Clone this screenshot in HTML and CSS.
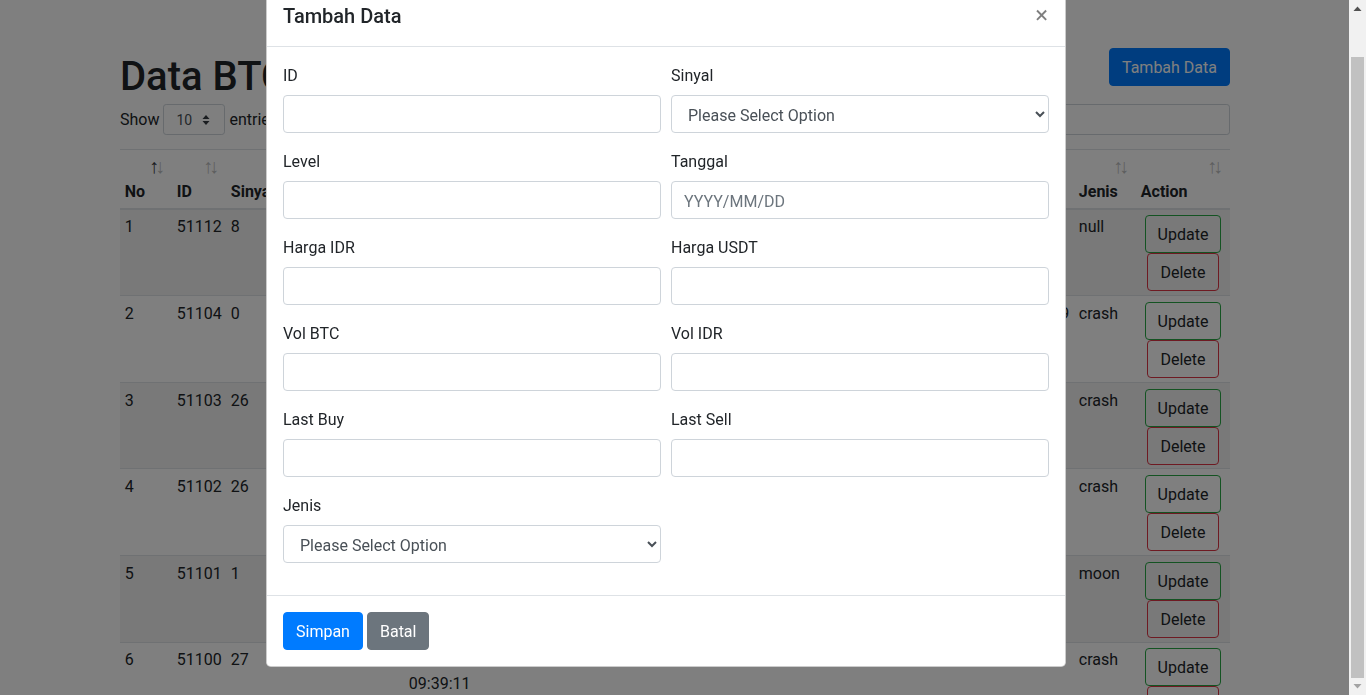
FILE: index.html
```html
<!DOCTYPE html>
<html lang="id">
<head>
<meta charset="utf-8">
<title>Data BTC</title>
<link rel="stylesheet" href="styles.css">
</head>
<body>
<div class="container">
  <div class="page-head">
    <h1 class="page-title">Data BTC IDR</h1>
    <button class="btn btn-primary" type="button">Tambah Data</button>
  </div>
  <div class="dt-controls">
    <div class="dt-length">Show
      <span class="sel-sm"><span>10</span>
        <svg class="sel-sm-icon" width="8" height="12" viewBox="0 0 8 12"><path d="M4 1 L7.5 5 H0.5 Z M4 11 L0.5 7 H7.5 Z" fill="#343a40"/></svg>
      </span>
      entries</div>
    <div class="dt-filter">Search: <span class="search-box"></span></div>
  </div>
  <table class="dt-table">
    <colgroup>
      <col class="c-no"><col class="c-id"><col class="c-sinyal"><col class="c-level"><col class="c-tanggal">
      <col class="c-hidr"><col class="c-husdt"><col class="c-vbtc"><col class="c-vidr"><col class="c-lbuy">
      <col class="c-lsell"><col class="c-jenis"><col class="c-action">
    </colgroup>
    <thead>
      <tr>
        <th class="sorting sorting-asc">No</th>
        <th class="sorting">ID</th>
        <th class="sorting">Sinyal</th>
        <th class="sorting">Level</th>
        <th class="sorting">Tanggal</th>
        <th class="sorting">Harga IDR</th>
        <th class="sorting">Harga USDT</th>
        <th class="sorting">Vol BTC</th>
        <th class="sorting">Vol IDR</th>
        <th class="sorting">Last Buy</th>
        <th class="sorting">Last Sell</th>
        <th class="sorting">Jenis</th>
        <th class="sorting">Action</th>
      </tr>
    </thead>
    <tbody>
      <tr class="odd">
        <td>1</td><td>51112</td><td>8</td><td>2</td><td>2021-05-20 10:37:45</td>
        <td>531000000</td><td>37120</td><td>12.53</td><td>6653430</td><td>530990000</td><td class="num"></td><td>null</td>
        <td><div class="actions"><button class="btn btn-update" type="button">Update</button><button class="btn btn-delete" type="button">Delete</button></div></td>
      </tr>
      <tr>
        <td>2</td><td>51104</td><td>0</td><td>1</td><td>2021-05-20 10:11:02</td>
        <td>529400000</td><td>37008</td><td>9.82</td><td>5198708</td><td>529350000</td><td class="num">5299</td><td>crash</td>
        <td><div class="actions"><button class="btn btn-update" type="button">Update</button><button class="btn btn-delete" type="button">Delete</button></div></td>
      </tr>
      <tr class="odd">
        <td>3</td><td>51103</td><td>26</td><td>3</td><td>2021-05-20 10:02:37</td>
        <td>528100000</td><td>36917</td><td>8.41</td><td>4441321</td><td>528050000</td><td class="num"></td><td>crash</td>
        <td><div class="actions"><button class="btn btn-update" type="button">Update</button><button class="btn btn-delete" type="button">Delete</button></div></td>
      </tr>
      <tr>
        <td>4</td><td>51102</td><td>26</td><td>3</td><td>2021-05-20 09:54:18</td>
        <td>527700000</td><td>36889</td><td>7.96</td><td>4200492</td><td>527650000</td><td class="num"></td><td>crash</td>
        <td><div class="actions"><button class="btn btn-update" type="button">Update</button><button class="btn btn-delete" type="button">Delete</button></div></td>
      </tr>
      <tr class="odd">
        <td>5</td><td>51101</td><td>1</td><td>1</td><td>2021-05-20 09:46:50</td>
        <td>534200000</td><td>37344</td><td>10.07</td><td>5379394</td><td>534150000</td><td class="num"></td><td>moon</td>
        <td><div class="actions"><button class="btn btn-update" type="button">Update</button><button class="btn btn-delete" type="button">Delete</button></div></td>
      </tr>
      <tr>
        <td>6</td><td>51100</td><td>27</td><td>3</td><td>2021-05-20 09:39:11</td>
        <td>526900000</td><td>36833</td><td>11.25</td><td>5927625</td><td>526850000</td><td class="num"></td><td>crash</td>
        <td><div class="actions"><button class="btn btn-update" type="button">Update</button><button class="btn btn-delete" type="button">Delete</button></div></td>
      </tr>
    </tbody>
  </table>
</div>

<div class="modal-layer">
  <div class="modal-scroll">
    <div class="modal-dialog">
      <div class="modal-content">
        <div class="modal-header">
          <h5 class="modal-title">Tambah Data</h5>
          <button class="close" type="button">&times;</button>
        </div>
        <form class="modal-body">
          <div class="form-row">
            <div class="form-group"><label>ID</label><input class="form-control" type="text"></div>
            <div class="form-group"><label>Sinyal</label>
              <select class="form-control"><option>Please Select Option</option></select></div>
            <div class="form-group"><label>Level</label><input class="form-control" type="text"></div>
            <div class="form-group"><label>Tanggal</label><input class="form-control" type="text" placeholder="YYYY/MM/DD"></div>
            <div class="form-group"><label>Harga IDR</label><input class="form-control" type="text"></div>
            <div class="form-group"><label>Harga USDT</label><input class="form-control" type="text"></div>
            <div class="form-group"><label>Vol BTC</label><input class="form-control" type="text"></div>
            <div class="form-group"><label>Vol IDR</label><input class="form-control" type="text"></div>
            <div class="form-group"><label>Last Buy</label><input class="form-control" type="text"></div>
            <div class="form-group"><label>Last Sell</label><input class="form-control" type="text"></div>
            <div class="form-group"><label>Jenis</label>
              <select class="form-control"><option>Please Select Option</option></select></div>
          </div>
        </form>
        <div class="modal-footer">
          <button class="btn btn-primary" type="button">Simpan</button>
          <button class="btn btn-secondary" type="button">Batal</button>
        </div>
      </div>
    </div>
  </div>
  <div class="scrollbar">
    <div class="sb-btn">
      <svg width="17" height="17" viewBox="0 0 17 17"><path d="M4.5 11 L8.5 6.5 L12.5 11 Z" fill="#505050"/></svg>
    </div>
    <div class="sb-track"><div class="sb-thumb"></div></div>
    <div class="sb-btn">
      <svg width="17" height="17" viewBox="0 0 17 17"><path d="M4.5 6 L12.5 6 L8.5 10.5 Z" fill="#a3a3a3"/></svg>
    </div>
  </div>
</div>
</body>
</html>
```
FILE: styles.css
```css
* { box-sizing: border-box; }

html, body {
  margin: 0;
  height: 100%;
}

body {
  font-family: Roboto, "Liberation Sans", sans-serif;
  font-size: 16px;
  line-height: 1.5;
  color: #212529;
  background: #fff;
  overflow: hidden;
  padding-right: 16px;
}

button, input, select {
  font-family: inherit;
}

.container {
  width: 1140px;
  margin: 0 auto;
  padding: 48px 15px 0;
}

.page-head {
  display: flex;
  justify-content: space-between;
  align-items: flex-start;
}

.page-title {
  margin: 5px 0 0;
  font-size: 40px;
  line-height: 48px;
  font-weight: 500;
}

.btn {
  display: inline-block;
  padding: 7px 12px 5px;
  font-size: 16px;
  line-height: 24px;
  font-weight: 400;
  border: 1px solid transparent;
  border-radius: 4px;
  background: transparent;
  color: #212529;
  cursor: pointer;
}

.btn-primary {
  background: #007bff;
  border-color: #007bff;
  color: #fff;
}

.btn-secondary {
  background: #6c757d;
  border-color: #6c757d;
  color: #fff;
}

.dt-controls {
  display: flex;
  justify-content: space-between;
  align-items: center;
  margin-top: 3px;
  height: 31px;
}

.dt-length {
  display: flex;
  align-items: center;
}

.sel-sm {
  display: inline-flex;
  align-items: center;
  justify-content: space-between;
  width: 62px;
  height: 31px;
  margin: 0 4px;
  padding: 1px 14px 0 12px;
  border: 1px solid #ced4da;
  border-radius: 3.2px;
  font-size: 14px;
  color: #495057;
  background: #fff;
}

.dt-filter {
  display: flex;
  align-items: center;
}

.search-box {
  display: inline-block;
  width: 200px;
  height: 31px;
  margin-left: 8px;
  border: 1px solid #ced4da;
  border-radius: 3.2px;
  background: #fff;
}

.dt-table {
  width: 100%;
  table-layout: fixed;
  border-collapse: collapse;
  margin-top: 14px;
}

.c-no { width: 52px; }
.c-id { width: 54px; }
.c-sinyal { width: 80px; }
.c-level { width: 98px; }
.c-tanggal { width: 100px; }
.c-hidr { width: 95px; }
.c-husdt { width: 95px; }
.c-vbtc { width: 90px; }
.c-vidr { width: 100px; }
.c-lbuy { width: 95px; }
.c-lsell { width: 95px; }
.c-jenis { width: 62px; }
.c-action { width: 94px; }

.dt-table th {
  position: relative;
  text-align: left;
  vertical-align: bottom;
  font-weight: 700;
  padding: 5.8px 20px 3.8px 4.8px;
  border-top: 1px solid #dee2e6;
  border-bottom: 2px solid #dee2e6;
}

.dt-table th.sorting::before,
.dt-table th.sorting::after {
  position: absolute;
  top: 4px;
  font-family: "Liberation Sans", Arial, sans-serif;
  font-size: 20px;
  line-height: 24px;
  font-weight: 400;
  opacity: 0.3;
}

.dt-table th.sorting::before {
  content: "\2191";
  right: 13px;
}

.dt-table th.sorting::after {
  content: "\2193";
  right: 7px;
}

.dt-table th.sorting-asc::before {
  opacity: 0.9;
}

.dt-table td {
  vertical-align: top;
  padding: 5.8px 4.8px 3.8px;
  border-top: 1px solid #dee2e6;
  overflow: hidden;
}

.dt-table td.num {
  text-align: right;
}

.dt-table tbody tr.odd {
  background: rgba(0, 0, 0, 0.05);
}

.actions {
  display: flex;
  flex-direction: column;
  align-items: center;
}

.btn-update {
  border-color: #28a745;
}

.btn-delete {
  border-color: #dc3545;
}

/* modal */
.modal-layer {
  position: fixed;
  top: 0;
  left: 0;
  right: 0;
  bottom: 0;
  display: flex;
}

.modal-scroll {
  flex: 1;
  background: rgba(0, 0, 0, 0.5);
  padding-right: 17px;
  overflow: hidden;
}

.modal-dialog {
  width: 800px;
  margin: -17px auto 0;
}

.modal-content {
  background: #fff;
  border: 1px solid rgba(0, 0, 0, 0.2);
  border-radius: 4.8px;
}

.modal-header {
  display: flex;
  align-items: flex-start;
  justify-content: space-between;
  padding: 17px 16px 15px;
  border-bottom: 1px solid #dee2e6;
}

.modal-title {
  margin: 0;
  font-size: 20px;
  line-height: 30px;
  font-weight: 500;
}

.close {
  margin: -17px -16px -15px auto;
  padding: 16px 17px 16px 16px;
  border: 0;
  background: transparent;
  font-size: 24px;
  line-height: 30px;
  font-weight: 400;
  color: #000;
  opacity: 0.5;
}

.modal-body {
  display: block;
  margin: 0;
  padding: 16px 16px 0;
}

.form-row {
  display: grid;
  grid-template-columns: 1fr 1fr;
  column-gap: 10px;
}

.form-group {
  margin-bottom: 16px;
}

.form-group label {
  display: block;
  padding-top: 1px;
  margin-bottom: 7px;
}

.form-control {
  display: block;
  width: 100%;
  height: 38px;
  padding: 7px 12px 5px;
  font-size: 16px;
  line-height: 24px;
  color: #495057;
  background-color: #fff;
  border: 1px solid #ced4da;
  border-radius: 4px;
}

.form-control::placeholder {
  color: #6c757d;
  opacity: 1;
}

.modal-footer {
  display: flex;
  gap: 4px;
  padding: 16px;
  margin-top: 16px;
  border-top: 1px solid #dee2e6;
}

/* scrollbar */
.scrollbar {
  width: 17px;
  display: flex;
  flex-direction: column;
  background: #f1f1f1;
}

.sb-btn {
  height: 17px;
  flex: none;
}

.sb-btn svg {
  display: block;
}

.sb-track {
  flex: 1;
  display: flex;
  flex-direction: column;
  padding: 40px 2px 0;
}

.sb-thumb {
  flex: 1;
  background: #c1c1c1;
}
```
